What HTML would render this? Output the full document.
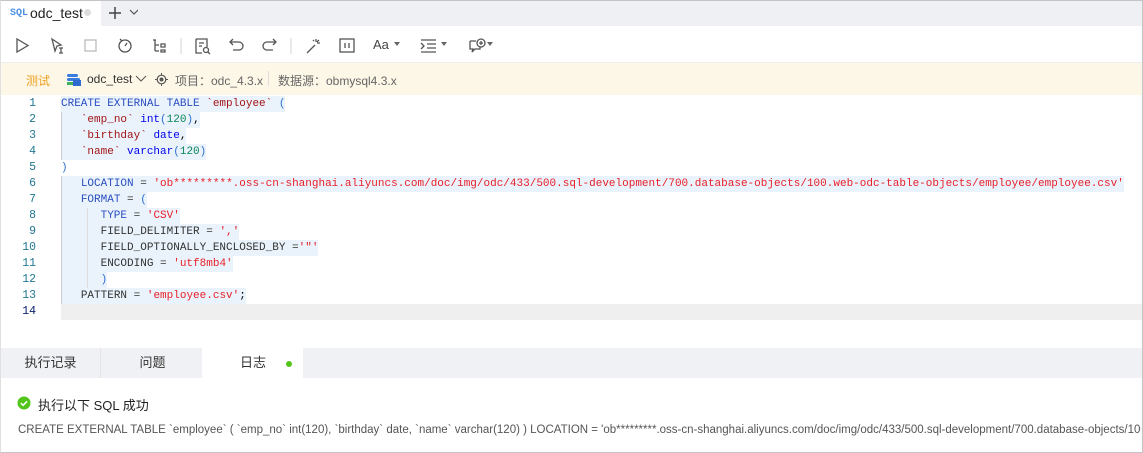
<!DOCTYPE html>
<html><head><meta charset="utf-8"><style>
*{margin:0;padding:0;box-sizing:border-box}
body{width:1143px;height:453px;background:#fff;font-family:"Liberation Sans","Noto Sans CJK SC",sans-serif;position:relative;overflow:hidden}
.frame{position:absolute;left:0;top:0;width:1143px;height:453px;border:1px solid #c4c4c4;border-left:1px solid #e0e0e0}
.tabbar{position:absolute;left:1px;top:1px;width:1141px;height:25px;background:#eef0f3}
.tab{position:absolute;left:0;top:0;width:100px;height:25px;background:#fff}
.toolbar{position:absolute;left:1px;top:26px;width:1141px;height:37px;background:#fff;border-bottom:1px solid #eee}
.info{position:absolute;left:1px;top:63px;width:1141px;height:32px;background:#fdf7e7;font-size:12px;color:#666}
.abs{position:absolute;white-space:pre}
.code{font-family:"Liberation Mono",monospace;font-size:11px;line-height:16px}
.ln{position:absolute;width:36px;text-align:right;color:#237893;font-family:"Liberation Mono",monospace;font-size:11.5px;line-height:16px}
.hl{background:#eaf3fb}
.k{color:#2a4fc0}.t{color:#0000ee}.i{color:#a31515}.s{color:#e8202a}.n{color:#098658}.p{color:#333}.b{color:#3070d0}
.btabs{position:absolute;left:1px;top:348px;width:1141px;height:30px;background:#f0f1f4}
.bt{position:absolute;top:0;height:30px;font-size:13px;color:#333;line-height:30px}
svg{position:absolute}
</style></head><body>
<div class="tabbar"><div class="tab"></div></div>
<div class="abs" style="left:10px;top:8px;font-size:10px;line-height:12px;font-weight:bold;color:#4a90e2;font-family:'Liberation Mono',monospace">SQL</div>
<div class="abs" style="left:30px;top:4px;font-size:14px;line-height:18px;color:#222">odc_test</div>
<div class="abs" style="left:84px;top:9px;width:7px;height:7px;border-radius:50%;background:#ddd"></div>
<svg style="left:108px;top:5px" width="30" height="16"><path d="M7 2v12M1 8h12" stroke="#444" stroke-width="1.5" fill="none"/><path d="M22 5l4 4 4-4" stroke="#555" stroke-width="1.2" fill="none"/></svg>

<div class="toolbar"></div>
<svg style="left:0;top:30px" width="500" height="30" fill="none" stroke="#555" stroke-width="1.3">
<path d="M17 9v13l11-6.5z"/>
<path d="M52 9l9 6-4 1-2 5z M59 18h4 M61 18v5 M59 23h4"/>
<rect x="85" y="10" width="11" height="11" stroke="#bbb"/>
<circle cx="125" cy="16" r="6"/><path d="M120 9l2 2 M125 16l2-3"/>
<path d="M153 10h3 M155 10v11 M155 15h4 M155 21h4 M161 14h4v3h-4z M161 20h4v2h-4z"/>
<path d="M181 8v16" stroke="#ddd"/>
<path d="M196 9h11v8 M196 9v14h6 M199 13h5 M199 16h3"/><circle cx="206" cy="20" r="2.5"/><path d="M208 22l2 2"/>
<path d="M230 12h9a4 4 0 010 8h-6 M233 9l-3 3 3 3"/>
<path d="M276 12h-9a4 4 0 000 8h6 M273 9l3 3-3 3"/>
<path d="M291 8v16" stroke="#ddd"/>
<path d="M307 23l8-8 M316 9v3 M320 13h-3 M319 10l-2 2 M313 10l1 1"/>
<rect x="340" y="9" width="14" height="13"/><path d="M345 13v5 M349 13v5"/>
<path d="M421 10h15 M427 14h9 M427 18h9 M421 22h15 M421 13l3 3-3 3"/>
<path d="M470 11h6 M470 11v8h3l-1 3 3-3h5v-2"/><circle cx="481" cy="13" r="4"/><path d="M479 13h4 M481 11v4"/>
</svg>
<div class="abs" style="left:373px;top:37px;font-size:13px;color:#444">Aa</div>
<svg style="left:394px;top:42px" width="110" height="6" fill="#666"><path d="M0 0h6l-3 4z M47 0h6l-3 4z M93 0h6l-3 4z"/></svg>

<div class="info">
<div class="abs" style="left:25px;top:9px;color:#f0a020">测试</div>
<svg style="left:65px;top:10px" width="16" height="14"><rect x="1" y="1" width="11" height="3" rx="1.5" fill="#3a7be0"/><rect x="1" y="5" width="13" height="3" rx="1.5" fill="#3a7be0"/><rect x="1" y="9" width="13" height="3" fill="#40b060"/><rect x="7" y="7" width="8" height="6" fill="#2f6ad0"/></svg>
<div class="abs" style="left:86px;top:9px;color:#333">odc_test</div>
<svg style="left:134px;top:12px" width="12" height="8"><path d="M1 1l5 5 5-5" stroke="#555" fill="none"/></svg>
<svg style="left:154px;top:10px" width="13" height="13"><circle cx="6.5" cy="6.5" r="4.3" stroke="#555" fill="none" stroke-width="1.2"/><circle cx="6.5" cy="6.5" r="2" fill="#555"/><path d="M6.5 0v2 M6.5 11v2 M0 6.5h2 M11 6.5h2" stroke="#555"/></svg>
<div class="abs" style="left:174px;top:9px">项目：odc_4.3.x</div>
<div class="abs" style="left:267px;top:8px;width:1px;height:15px;background:#ddd"></div>
<div class="abs" style="left:277px;top:9px">数据源：obmysql4.3.x</div>
</div>

<div class="abs" style="left:61px;top:304px;width:1081px;height:16px;background:#efefef"></div>
<div id="ed" style="position:absolute;left:0;top:1px;width:1143px;height:330px">
<div class="ln" style="top:95px;left:0">1</div><div class="ln" style="top:111px;left:0">2</div><div class="ln" style="top:127px;left:0">3</div><div class="ln" style="top:143px;left:0">4</div><div class="ln" style="top:159px;left:0">5</div><div class="ln" style="top:175px;left:0">6</div><div class="ln" style="top:191px;left:0">7</div><div class="ln" style="top:207px;left:0">8</div><div class="ln" style="top:223px;left:0">9</div><div class="ln" style="top:239px;left:0">10</div><div class="ln" style="top:255px;left:0">11</div><div class="ln" style="top:271px;left:0">12</div><div class="ln" style="top:287px;left:0">13</div><div class="ln" style="top:303px;left:0;color:#0b216f">14</div>
<div class="abs code hl" style="left:61px;top:95px"><span class="k">CREATE EXTERNAL TABLE </span><span class="i">`employee`</span> <span class="b">(</span></div>
<div class="abs code hl" style="left:61px;top:111px">   <span class="i">`emp_no`</span> <span class="t">int</span><span class="b">(</span><span class="n">120</span><span class="b">)</span>,</div>
<div class="abs code hl" style="left:61px;top:127px">   <span class="i">`birthday`</span> <span class="t">date</span>,</div>
<div class="abs code hl" style="left:61px;top:143px">   <span class="i">`name`</span> <span class="t">varchar</span><span class="b">(</span><span class="n">120</span><span class="b">)</span></div>
<div class="abs code" style="left:61px;top:159px"><span class="b">)</span></div>
<div class="abs code hl" style="left:61px;top:175px">   <span class="k">LOCATION</span> <span class="p">=</span> <span class="s">'ob*********.oss-cn-shanghai.aliyuncs.com/doc/img/odc/433/500.sql-development/700.database-objects/100.web-odc-table-objects/employee/employee.csv'</span></div>
<div class="abs code hl" style="left:61px;top:191px">   <span class="k">FORMAT</span> <span class="p">=</span> <span class="b">(</span></div>
<div class="abs code hl" style="left:61px;top:207px">      <span class="k">TYPE</span> <span class="p">=</span> <span class="s">'CSV'</span></div>
<div class="abs code hl" style="left:61px;top:223px">      <span class="p">FIELD_DELIMITER =</span> <span class="s">','</span></div>
<div class="abs code hl" style="left:61px;top:239px">      <span class="p">FIELD_OPTIONALLY_ENCLOSED_BY =</span><span class="s">'"'</span></div>
<div class="abs code hl" style="left:61px;top:255px">      <span class="p">ENCODING =</span> <span class="s">'utf8mb4'</span></div>
<div class="abs code hl" style="left:61px;top:271px">      <span class="b">)</span></div>
<div class="abs code hl" style="left:61px;top:287px">   <span class="p">PATTERN =</span> <span class="s">'employee.csv'</span>;</div>
<div class="abs" style="left:61px;top:111px;width:1px;height:48px;background:#ccc"></div>
<div class="abs" style="left:61px;top:175px;width:1px;height:128px;background:#ccc"></div>
<div class="abs" style="left:87px;top:207px;width:1px;height:80px;background:#ddd"></div>
</div>

<div class="btabs">
<div class="bt" style="left:0;width:100px;text-align:center;border-right:1px solid #e4e4e4">执行记录</div>
<div class="bt" style="left:101px;width:101px;text-align:center">问题</div>
<div class="bt" style="left:201px;width:101px;background:#fff;padding-left:38px">日志</div>
<div class="abs" style="left:285px;top:13px;width:6px;height:6px;border-radius:50%;background:#52c41a"></div>
</div>
<svg style="left:17px;top:396px" width="14" height="14"><circle cx="7" cy="7" r="6.5" fill="#52c41a"/><path d="M3.8 7l2.3 2.3 4-4" stroke="#fff" stroke-width="1.5" fill="none"/></svg>
<div class="abs" style="left:38px;top:395px;font-size:13px;color:#222">执行以下 SQL 成功</div>
<div class="abs" style="left:18px;top:424px;font-size:11.5px;color:#555;width:1123px;overflow:hidden">CREATE EXTERNAL TABLE `employee` ( `emp_no` int(120), `birthday` date, `name` varchar(120) ) LOCATION = 'ob*********.oss-cn-shanghai.aliyuncs.com/doc/img/odc/433/500.sql-development/700.database-objects/100.web-odc-table-objects</div>
<div class="frame"></div>
</body></html>
